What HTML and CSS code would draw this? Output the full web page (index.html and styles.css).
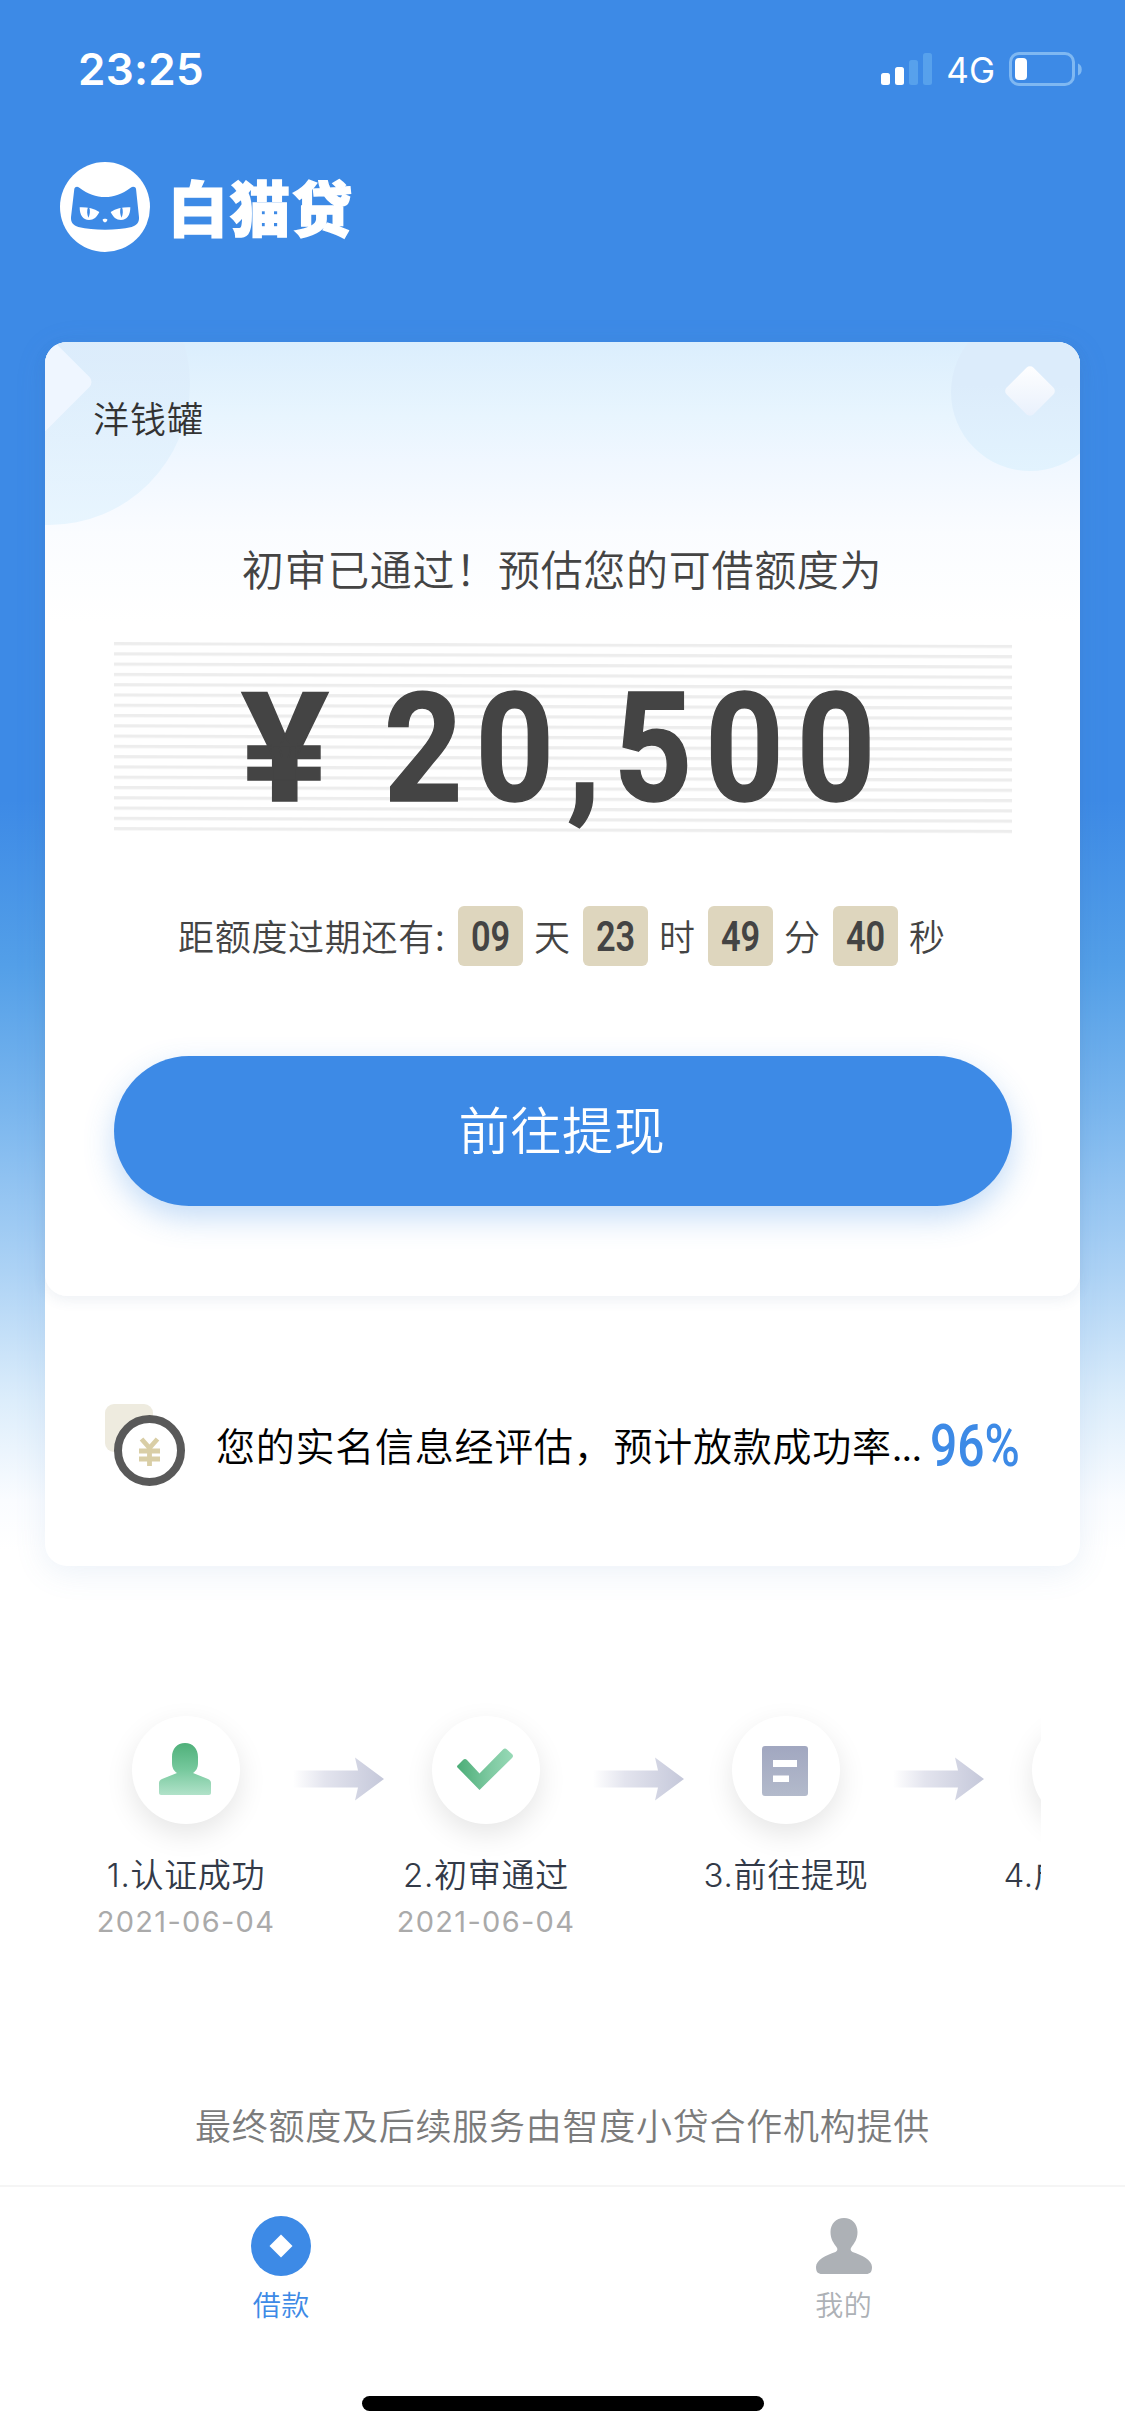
FILE: index.html
```html
<!DOCTYPE html>
<html lang="zh-CN">
<head>
<meta charset="utf-8">
<title>白猫贷</title>
<link rel="stylesheet" href="styles.css">
</head>
<body>
<div class="page">
  <header class="status">
    <span class="time">23:25</span>
    <div class="status-right">
      <svg class="signal" width="51" height="32" viewBox="0 0 51 32" fill="#fff">
        <rect x="0" y="20" width="9" height="12" rx="2.5"/>
        <rect x="14" y="14" width="9" height="18" rx="2.5"/>
        <rect x="28" y="7" width="9" height="25" rx="2.5" fill="#57a1ec"/>
        <rect x="42" y="0" width="9" height="32" rx="2.5" fill="#57a1ec"/>
      </svg>
      <span class="network">4G</span>
      <svg width="74" height="34" viewBox="0 0 74 34">
        <rect x="1.5" y="1.5" width="63" height="31" rx="8.5" fill="none" stroke="#7fb8f2" stroke-width="3"/>
        <rect x="6" y="6" width="12" height="22" rx="4" fill="#fff"/>
        <path d="M69 11.500c5 1.500 5 10.500 0 12z" fill="#7fb8f2"/>
      </svg>
    </div>
  </header>

  <div class="logo">
    <svg width="90" height="90" viewBox="60 66 270 270">
      <circle cx="195" cy="201" r="135" fill="#fff"/>
      <path fill="#3d8ae6" d="M103 146c2-6 9-8 15-3 26 19 50 28 77 28s51-9 77-28c6-5 15-3 16 3l9 86c1 15-7 25-22 29-25 6-50 8-80 8s-55-2-80-8c-15-4-23-14-22-29z"/>
      <path fill="#fff" d="M119 202c20-1 42 3 59 14-7 15-17 24-31 24-18 0-28-15-28-38zM271 202c-20-1-42 3-59 14 7 15 17 24 31 24 18 0 28-15 28-38z"/>
      <path fill="#3d8ae6" d="M144 202c-4 9-3 22 1 31 5-10 6-21 3-30zM246 202c4 9 3 22-1 31-5-10-6-21-3-30z"/>
      <path fill="#fff" d="M188 239c1-4 13-4 14 0 0 4-4 8-7 8s-7-4-7-8z"/>
    </svg>
    <span class="logo-name">白猫贷</span>
  </div>

  <main class="card">
    <section class="offer">
      <svg class="deco" width="1035" height="260" viewBox="0 0 1035 260">
        <defs>
          <linearGradient id="disc" x1="0" y1="0" x2="0" y2="1"><stop offset="0.450" stop-color="#dcecfb"/><stop offset="1" stop-color="#e2f3fe"/></linearGradient>
          <linearGradient id="gem" x1="0" y1="0" x2="1" y2="1"><stop offset="0" stop-color="#fff"/><stop offset="1" stop-color="#e8f0fc"/></linearGradient>
        </defs>
        <circle cx="4" cy="42" r="141" fill="url(#disc)" opacity=".75"/>
        <rect x="-52" y="-2" width="84" height="84" rx="7" transform="rotate(45 -10 40)" fill="#eff6ff"/>
        <circle cx="985" cy="50" r="79" fill="url(#disc)"/>
        <rect x="966" y="30" width="38" height="38" rx="5" transform="rotate(45 985 49)" fill="url(#gem)"/>
      </svg>
      <div class="brand">洋钱罐</div>
      <div class="headline">初审已通过！预估您的可借额度为</div>
      <div class="amount">
        <svg class="rules" width="898" height="194" viewBox="0 0 898 194">
          <defs><pattern id="rule" width="898" height="10.280" patternUnits="userSpaceOnUse"><rect width="898" height="3.200" fill="#ededed"/></pattern></defs>
          <path fill="url(#rule)" transform="skewY(.18)" d="M0 0H898V189H0z"/>
        </svg>
        <span class="amount-value"><span class="yen">¥</span><span class="num">20,500</span></span>
      </div>
      <div class="countdown">
        <span class="label">距额度过期还有:</span>
        <span class="box"><b>09</b></span><span class="unit">天</span>
        <span class="box"><b>23</b></span><span class="unit">时</span>
        <span class="box"><b>49</b></span><span class="unit">分</span>
        <span class="box"><b>40</b></span><span class="unit">秒</span>
      </div>
      <div class="cta">前往提现</div>
    </section>
    <section class="rate">
      <svg width="81" height="84" viewBox="0 0 81 84">
        <rect x="0" y="1" width="48" height="48" rx="9" fill="#eeebdf"/>
        <circle cx="44.500" cy="47.500" r="31.500" fill="#fff" stroke="#595959" stroke-width="8"/>
        <path d="M36.500 36l8 9 8-9M34 48h21M34 56h21M44.500 45v18" fill="none" stroke="#d9cea6" stroke-width="4.800"/>
      </svg>
      <span class="rate-text">您的实名信息经评估，预计放款成功率<i>...</i></span>
      <span class="rate-value"><b>96%</b></span>
    </section>
  </main>

  <svg width="0" height="0" class="defs">
    <defs>
      <linearGradient id="green" x1="0" y1="0" x2="0" y2="1"><stop offset="0" stop-color="#4fb07a"/><stop offset=".5" stop-color="#75c89c"/><stop offset="1" stop-color="#b1e2c9"/></linearGradient>
      <linearGradient id="tick" x1="0" y1="0" x2="1" y2="0"><stop offset="0" stop-color="#4bad77"/><stop offset=".6" stop-color="#7fcaa2"/><stop offset="1" stop-color="#97d9b6"/></linearGradient>
      <linearGradient id="slate" x1="0" y1="0" x2="0" y2="1"><stop offset="0" stop-color="#a1a7c0"/><stop offset="1" stop-color="#b3bacb"/></linearGradient>
      <linearGradient id="fade" x1="0" y1="0" x2="1" y2="0"><stop offset="0" stop-color="#fff"/><stop offset=".35" stop-color="#e3e4ee"/><stop offset="1" stop-color="#c5c8da"/></linearGradient>
      <symbol id="arrow" viewBox="0 0 91 44"><path fill="url(#fade)" d="M0 13.500H65L62 0.500 91 22 62 43.500 65 30.500H0z"/></symbol>
    </defs>
  </svg>
  <div class="steps">
    <div class="step">
      <div class="disc"><svg width="52" height="52" viewBox="0 0 52 52"><path fill="url(#green)" d="M26 0c8 0 13 6 13 14v6c0 5-2 8-5 10l15 6c2 1 3 2 3 4v10c0 1-1 2-2 2H2c-1 0-2-1-2-2V40c0-2 1-3 3-4l15-6c-3-2-5-5-5-10v-6C13 6 18 0 26 0z"/></svg></div>
      <div class="step-name">1.认证成功</div>
      <div class="step-date">2021-06-04</div>
      <svg class="arrow" width="91" height="44"><use href="#arrow"/></svg>
    </div>
    <div class="step">
      <div class="disc"><svg width="56" height="42" viewBox="0 0 56 42"><path fill="url(#tick)" d="M1 17L6 12q2-2 4 0L22.500 25.500 46 1.500q2-2 4 0L55 6q2 2 0 4L22.500 42 1 20q-2-1.500 0-3z"/></svg></div>
      <div class="step-name">2.初审通过</div>
      <div class="step-date">2021-06-04</div>
      <svg class="arrow" width="91" height="44"><use href="#arrow"/></svg>
    </div>
    <div class="step">
      <div class="disc disc-doc"><svg width="46" height="50" viewBox="0 0 46 50"><rect width="46" height="50" rx="3" fill="url(#slate)"/><path d="M11 14h24v7H11zM11 29.500h16v6.500H11z" fill="#fff"/></svg></div>
      <div class="step-name">3.前往提现</div>
      <svg class="arrow" width="91" height="44"><use href="#arrow"/></svg>
    </div>
    <div class="step">
      <div class="disc"></div>
      <div class="step-name">4.成功放款</div>
    </div>
  </div>

  <div class="note">最终额度及后续服务由智度小贷合作机构提供</div>

  <nav class="tabs">
    <div class="tab active">
      <svg width="60" height="60" viewBox="0 0 60 60"><circle cx="30" cy="30" r="30" fill="#3d8ae6"/><path d="M30 18.500L41.500 30 30 41.500 18.500 30z" fill="#fff"/></svg>
      <span>借款</span>
    </div>
    <div class="tab">
      <svg width="60" height="60" viewBox="0 0 60 60"><path fill="#adb1b6" d="M30 2c8 0 13.500 6 13.500 14 0 7-3 11-6 15-1.500 2-1 4 1 5C48 39 58 44 58 51c0 5-2 7-6 7H8c-4 0-6-2-6-7 0-7 10-12 19.500-15 2-1 2.500-3 1-5-3-4-6-8-6-15C16.500 8 22 2 30 2z"/></svg>
      <span>我的</span>
    </div>
  </nav>
  <div class="home-bar"></div>
</div>
</body>
</html>
```
FILE: styles.css
```css
* { box-sizing: border-box; }
body {
  margin: 0;
  background: #fff;
  font-family: "Noto Sans CJK SC", sans-serif;
  font-weight: 350;
  color: #444;
}
svg { display: block; flex: none; }
.page {
  width: 1125px;
  height: 2436px;
  display: flex;
  flex-direction: column;
  overflow: hidden;
  white-space: nowrap;
  background: linear-gradient(#3d8ae6 0, #3d8ae6 800px, #539fe8 965px, #7ab6ee 1110px, #acd2f5 1270px, #dcedfb 1400px, #fafcff 1500px, #fff 1550px);
}
.status {
  height: 138px;
  padding: 0 42px 0 78px;
  display: flex;
  align-items: center;
  justify-content: space-between;
  color: #fff;
  font-family: Inter, sans-serif;
}
.time { font-size: 44px; font-weight: 600; letter-spacing: .3px; }
.status-right { display: flex; align-items: center; }
.network { font-size: 35px; font-weight: 400; margin: 2px 14px 0 14px; }
.logo {
  height: 204px;
  padding: 24px 0 0 60px;
  display: flex;
  gap: 18px;
  color: #fff;
}
.logo-name {
  font-size: 60px;
  line-height: 87px;
  font-weight: 900;
  letter-spacing: 2px;
  -webkit-text-stroke: 1.5px #fff;
}
.card {
  width: 1035px;
  height: 1224px;
  margin: 0 45px;
  border-radius: 22px;
  background: #fff;
  box-shadow: 0 6px 32px rgba(90, 140, 200, .12);
}
.offer {
  position: relative;
  height: 954px;
  padding-top: 45px;
  border-radius: 22px;
  overflow: hidden;
  background: linear-gradient(#dbeefd 0, #e8f5fe 75px, #f0f7ff 120px, #fafcff 190px, #fff 280px);
  box-shadow: 0 4px 14px rgba(60, 90, 130, .09);
}
.deco { position: absolute; left: 0; top: 0; }
.brand {
  position: relative;
  padding-left: 48px;
  line-height: 60px;
  font-size: 36px;
  letter-spacing: 1px;
  color: #333;
}
.headline {
  position: relative;
  margin-top: 91px;
  line-height: 60px;
  text-align: center;
  font-size: 42px;
  letter-spacing: .7px;
  text-indent: -1px;
}
.amount {
  position: relative;
  width: 898px;
  height: 192px;
  margin: 44px 0 0 69px;
}
.rules { position: absolute; left: 0; top: 0; }
.amount-value {
  position: relative;
  display: flex;
  padding-left: 127px;
  line-height: 214px;
  font-family: Roboto, sans-serif;
  font-size: 152px;
  font-weight: 700;
  -webkit-text-stroke: 1.5px #444;
}
.yen { width: 143px; transform: scaleX(1.08); transform-origin: 0 50%; }
.num { letter-spacing: 14.500px; transform: scaleX(.9); transform-origin: 0 50%; }
.countdown {
  height: 60px;
  margin-top: 72px;
  padding-left: 133px;
  display: flex;
  align-items: center;
  font-size: 36px;
}
.label { width: 280px; letter-spacing: .7px; padding-bottom: 2px; }
.box {
  width: 65px;
  height: 60px;
  border-radius: 6px;
  background: #ded6be;
  display: flex;
  align-items: center;
  justify-content: center;
}
.box b {
  font: 600 43px/62px Roboto, sans-serif;
  transform: scaleX(.8);
}
.unit { width: 60px; padding: 0 0 2px 11px; }
.cta {
  width: 898px;
  height: 150px;
  margin: 90px 0 0 69px;
  border-radius: 75px;
  background: #3d8ae6;
  box-shadow: 0 12px 30px rgba(61, 138, 230, .3);
  color: #fff;
  font-size: 51px;
  line-height: 144px;
  letter-spacing: .7px;
  text-align: center;
  text-indent: -2px;
}
.rate {
  height: 270px;
  padding: 27px 0 0 60px;
  display: flex;
  align-items: center;
  color: #000;
}
.rate-text { width: 714px; margin: 0 0 2px 30px; font-size: 39px; letter-spacing: .75px; }
.rate-text i { font: 400 37px Inter, sans-serif; letter-spacing: -.8px; }
.rate-value b {
  display: block;
  font: 500 60px/60px Roboto, sans-serif;
  padding-top: 2px;
  color: #3d8ae6;
  transform: scaleX(.8);
  transform-origin: 0 50%;
}
.defs { position: absolute; }
.steps {
  width: 1005px;
  height: 300px;
  margin: 120px 0 0 36px;
  padding-top: 30px;
  display: flex;
  overflow: hidden;
}
.step {
  position: relative;
  flex: none;
  width: 300px;
  display: flex;
  flex-direction: column;
  align-items: center;
}
.disc {
  width: 108px;
  height: 108px;
  border-radius: 50%;
  background: #fff;
  box-shadow: 0 10px 28px rgba(0, 0, 0, .1);
  display: flex;
  align-items: center;
  justify-content: center;
  padding: 0 3px 2px 0;
}
.disc-doc { padding: 2px 3px 0 0; }
.step-name {
  margin-top: 27px;
  font-family: Inter, "Noto Sans CJK SC", sans-serif;
  font-size: 33px;
  line-height: 48px;
  letter-spacing: .7px;
  color: #333a48;
}
.step-date {
  font-family: Inter, sans-serif;
  font-weight: 400;
  font-size: 29px;
  line-height: 46px;
  letter-spacing: 1.3px;
  color: #aaa;
}
.arrow { position: absolute; left: 257px; top: 41px; }
.note {
  height: 80px;
  margin-top: 101px;
  line-height: 75px;
  font-size: 36px;
  letter-spacing: .75px;
  text-align: center;
  color: #7b7b7b;
}
.tabs {
  height: 211px;
  margin-top: 18px;
  border-top: 2px solid #f5f5f5;
  padding-top: 29px;
  display: flex;
}
.tab {
  width: 562.5px;
  display: flex;
  flex-direction: column;
  align-items: center;
  font-size: 28px;
  line-height: 57px;
  color: #adb1b6;
  letter-spacing: .5px;
}
.active { color: #3d8ae6; }
.home-bar {
  width: 402px;
  height: 15px;
  margin-left: 362px;
  border-radius: 8px;
  background: #000;
}
```
